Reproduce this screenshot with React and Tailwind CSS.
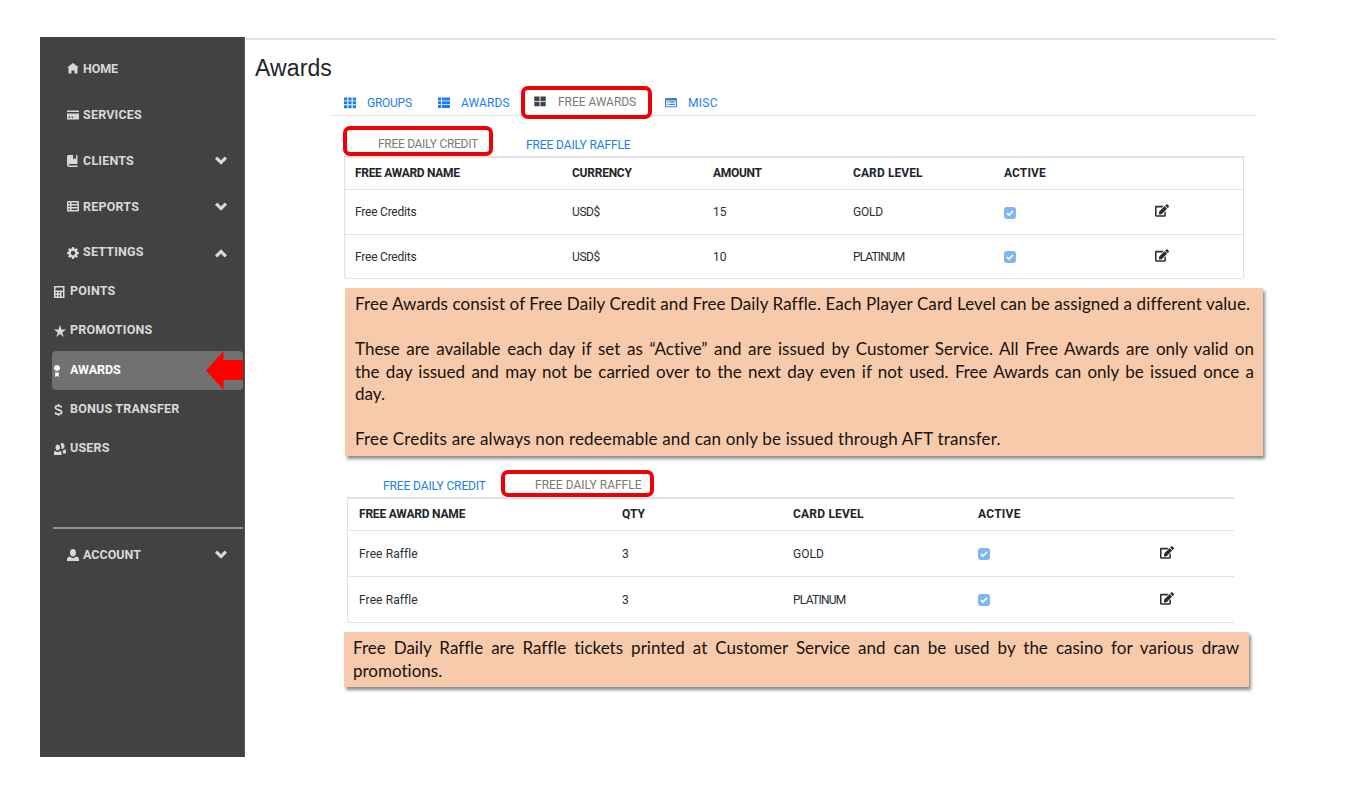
import React from "react";
import { FaEdit } from "react-icons/fa";

const GLYPHS = {
  home: "M4 0l-4 3h1v4h2v-2h2v2h2v-4.03l1 .03-4-3z",
  card: "M.25 1c-.14 0-.25.11-.25.25v.75h8v-.75c0-.14-.11-.25-.25-.25h-7.5zm-.25 2v3.75c0 .14.11.25.25.25h7.5c.14 0 .25-.11.25-.25v-3.75h-8zm1 2h1v1h-1v-1zm2 0h1v1h-1v-1z",
  book: "M1 0c-.07 0-.13.01-.19.03-.39.08-.7.39-.78.78-.03.06-.03.12-.03.19v5.5c0 .83.67 1.5 1.5 1.5h5.5v-1h-5.5c-.28 0-.5-.22-.5-.5s.22-.5.5-.5h5.5v-5.5c0-.28-.22-.5-.5-.5h-.5v3l-1-1-1 1v-3h-3z",
  sheet: "M.75 0c-.41 0-.75.34-.75.75v5.5c0 .41.34.75.75.75h6.5c.41 0 .75-.34.75-.75v-5.5c0-.41-.34-.75-.75-.75h-6.5zm.25 1h1v1h-1v-1zm2 0h4v1h-4v-1zm-2 2h1v1h-1v-1zm2 0h4v1h-4v-1zm-2 2h1v1h-1v-1zm2 0h4v1h-4v-1z",
  cog: "M3.5 0l-.5 1.19c-.1.03-.19.08-.28.13l-1.19-.5-.72.72.5 1.19c-.05.1-.09.18-.13.28l-1.19.5v1l1.19.5c.04.1.08.18.13.28l-.5 1.19.72.72 1.19-.5c.09.04.18.09.28.13l.5 1.19h1l.5-1.19c.09-.04.19-.08.28-.13l1.19.5.72-.72-.5-1.19c.04-.09.09-.19.13-.28l1.19-.5v-1l-1.19-.5c-.03-.09-.08-.19-.13-.28l.5-1.19-.72-.72-1.19.5c-.09-.04-.19-.09-.28-.13l-.5-1.19h-1zm.5 2.5c.83 0 1.5.67 1.5 1.5s-.67 1.5-1.5 1.5-1.5-.67-1.5-1.5.67-1.5 1.5-1.5z",
  calculator: "M0 0h7v8h-7zM1 1v2h5v-2zM1 4v1h1v-1zM3 4v1h1v-1zM5 4v3h1v-3zM1 6v1h1v-1zM3 6v1h1v-1z",
  star: "M4 0l-1 3h-3l2.5 2-1 3 2.5-2 2.5 2-1-3 2.5-2h-3l-1-3z",
  badge: "M2 0c-1.1 0-2 .9-2 2s.9 2 2 2 2-.9 2-2-.9-2-2-2zm-1.200 4.810v3.190l1.200-.7 1.200 .7v-3.190c-.31.110-.85.190-1.200 .190s-.89-.08-1.200-.190z",
  people: "M5.5 0c-.51 0-.95.35-1.19.88.45.54.69 1.275.69 2.13 0 .29-.03.55-.09.81.19.11.38.19.59.19.83 0 1.5-.9 1.5-2s-.67-2-1.5-2zm-3 1c-.83 0-1.5.9-1.5 2s.67 2 1.5 2 1.5-.9 1.5-2-.67-2-1.5-2zm4.75 3.16c-.43.51-1.02.82-1.69.84.27.38.44.84.44 1.34v.66h2v-1.66c0-.52-.31-.97-.75-1.19zm-6.5 1c-.44.22-.75.67-.75 1.19v1.66h5v-1.66c0-.52-.31-.97-.75-1.19-.45.53-1.06.84-1.75.84s-1.3-.32-1.75-.84z",
  person: "M4 0c-1.1 0-2 1.12-2 2.5s.9 2.5 2 2.5 2-1.12 2-2.5-.9-2.5-2-2.5zm-2.09 5c-1.06.05-1.91.92-1.91 2v1h8v-1c0-1.08-.84-1.95-1.91-2-.54.61-1.28 1-2.09 1-.81 0-1.55-.39-2.09-1z",
  down: "M1.5 1l-1.5 1.5 4 4 4-4-1.5-1.5-2.5 2.5-2.5-2.5z",
  up: "M4 1.5l-4 4 1.5 1.5 2.5-2.5 2.5 2.5 1.5-1.5-4-4z",
  grid3: "M0 .3h2.200v2h-2.200zM2.900 .3h2.200v2h-2.200zM5.800 .3h2.200v2h-2.200zM0 2.900h2.200v2h-2.200zM2.900 2.900h2.200v2h-2.200zM5.800 2.900h2.200v2h-2.200zM0 5.500h2.200v2h-2.200zM2.900 5.500h2.200v2h-2.200zM5.800 5.500h2.200v2h-2.200z",
  list: "M0 .4h2.100v1.900h-2.100zM2.600 .4h5.400v1.900h-5.400zM0 2.900h2.100v1.900h-2.100zM2.600 2.900h5.400v1.900h-5.400zM0 5.400h2.100v1.900h-2.100zM2.600 5.400h5.400v1.900h-5.400z",
  grid2: "M.2 .3h3.500v3h-3.500zM4.300 .3h3.500v3h-3.500zM.2 3.900h3.500v3h-3.500zM4.300 3.900h3.500v3h-3.500z",
  browser: "M.6 .7h6.8a.6 .6 0 0 1 .6 .6v5a.6 .6 0 0 1-.6 .6h-6.8a.6 .6 0 0 1-.6-.6v-5a.6 .6 0 0 1 .6-.6zM.8 2.3v3.8h6.4v-3.8zM1.5 2.9h.9v.8h-.9zM2.9 2.9h3.7v.8h-3.7zM1.5 4.5h.9v.8h-.9zM2.9 4.5h3.7v.8h-3.7z",
};

function Glyph({ name, className = "size-3" }) {
  if (name === "dollar") {
    return (
      <svg viewBox="0 0 8 8" className={className} fill="none" stroke="currentColor" strokeWidth="1.1">
        <path d="M4.900 2.500c0-.8-.6-1.300-1.400-1.300h-1.200c-.8 0-1.400.4-1.400 1.200 0 1.900 4.200 1.100 4.200 3 0 .8-.6 1.300-1.400 1.300h-1.400c-.8 0-1.400-.4-1.400-1.200M3 0v1.200M3 6.700v1.200" />
      </svg>
    );
  }
  return (
    <svg viewBox="0 0 8 8" className={className} fill="currentColor">
      <path fillRule="evenodd" d={GLYPHS[name]} />
    </svg>
  );
}

function MenuItem({ icon, label, arrow, className = "h-[46px]" }) {
  return (
    <div className={"flex items-center pl-[27px] pr-[17px] " + className}>
      <Glyph name={icon} className="size-3 shrink-0" />
      <span className="ml-1 flex-1">{label}</span>
      {arrow && <Glyph name={arrow} />}
    </div>
  );
}

function SubItem({ icon, label, className = "" }) {
  return (
    <div className={"flex h-[39px] items-center pl-[14px] " + className}>
      <Glyph name={icon} className="size-3 shrink-0" />
      <span className="ml-1">{label}</span>
    </div>
  );
}

function Sidebar() {
  return (
    <aside className="h-[720px] w-[205px] shrink-0 border-r border-[#555] bg-[#424242] pt-[9px] text-[12.5px] font-bold tracking-[0.2px] text-[#d9d9d9]">
      <MenuItem icon="home" label="HOME" className="h-[46px] tracking-[-0.1px]" />
      <MenuItem icon="card" label="SERVICES" />
      <MenuItem icon="book" label="CLIENTS" arrow="down" />
      <MenuItem icon="sheet" label="REPORTS" arrow="down" />
      <MenuItem icon="cog" label="SETTINGS" arrow="up" className="h-[45px]" />
      <div className="-mt-[3px] flex flex-col">
        <SubItem icon="calculator" label="POINTS" />
        <SubItem icon="star" label="PROMOTIONS" />
        <div className="relative ml-3 mr-px mt-px h-[39px] rounded bg-[#717171] text-white">
          <SubItem icon="badge" label="AWARDS" className="-ml-3 tracking-[-0.05px]" />
          <svg viewBox="0 0 37 39" className="absolute right-0 top-0 h-[39px] w-[37px]" fill="#fe0000">
            <path d="M0 19.5L17.500 0v9h19.500v20h-19.500v10z" />
          </svg>
        </div>
        <SubItem icon="dollar" label="BONUS TRANSFER" />
        <SubItem icon="people" label="USERS" />
      </div>
      <div className="ml-[13px] mr-px mt-[59px] h-[2px] bg-[#8f8f8f]" />
      <MenuItem icon="person" label="ACCOUNT" arrow="down" className="mt-[3px] h-[46px] tracking-[0px]" />
    </aside>
  );
}

function Ring({ className }) {
  return <div className={"pointer-events-none absolute rounded-[7px] border-4 border-[#ee0005] " + className} />;
}

function TopTabs() {
  return (
    <nav className="ml-[85px] flex h-[28px] w-[925px] border-b border-[#dee2e6] pl-[13px] text-[12px] text-[#1a80ef]">
      <div className="flex h-[30px] w-[94px] items-center tracking-[-0.25px]">
        <Glyph name="grid3" />
        <span className="ml-[11px]">GROUPS</span>
      </div>
      <div className="flex h-[30px] w-[96px] items-center tracking-[0.1px]">
        <Glyph name="list" />
        <span className="ml-[11px]">AWARDS</span>
      </div>
      <div className="relative flex h-[28px] w-[131px] items-center text-[#7a7a7a] tracking-[-0.05px]">
        <Glyph name="grid2" className="size-3 text-[#3f454b]" />
        <span className="ml-[12px]">FREE AWARDS</span>
        <Ring className="-left-[13px] -top-[2px] h-[33px] w-[131px]" />
      </div>
      <div className="flex h-[30px] items-center tracking-[0.3px]">
        <Glyph name="browser" className="size-3 text-[#3f7fd6]" />
        <span className="ml-[11px]">MISC</span>
      </div>
    </nav>
  );
}

function Check() {
  return (
    <span className="flex h-3 w-3 items-center justify-center rounded-[3px] bg-[#7fb6f3]">
      <svg viewBox="0 0 8 8" className="size-2" fill="none" stroke="#fff" strokeWidth="1.7">
        <path d="M1 4.200l2 1.800 4-4" />
      </svg>
    </span>
  );
}

function Cells({ row }) {
  return row.map((c, i) => (
    <div key={i} className={c.className || ""}>
      {c.check ? <Check /> : c.edit ? <FaEdit className="-mt-[3px] h-[13px] w-[14px]" /> : <span>{c.text}</span>}
    </div>
  ));
}

const checkCell = { check: true, className: "pt-px" };
const editCell = { edit: true };

function CreditTable() {
  const cols = "grid grid-cols-[217px_141px_140px_151px_151px_1fr] items-center pl-[10px] ";
  return (
    <section className="w-[900px] rounded-b-[3px] border border-t-2 border-[#dfe3e6] text-[12px] text-[#2a2e33]">
      <div className={cols + "h-[31px] pb-[2px] font-bold text-[#212529]"}>
        <span className="tracking-[-0.3px]">FREE AWARD NAME</span>
        <span className="tracking-[-0.25px]">CURRENCY</span>
        <span className="tracking-[-0.3px]">AMOUNT</span>
        <span className="tracking-[0.1px]">CARD LEVEL</span>
        <span className="tracking-[0.1px]">ACTIVE</span>
      </div>
      <div className={cols + "h-[45px] border-t border-[#e1e4e7]"}>
        <Cells row={[{ text: "Free Credits", className: "tracking-[-0.22px]" }, { text: "USD$", className: "tracking-[-0.4px]" }, { text: "15" }, { text: "GOLD", className: "tracking-[-0.2px]" }, checkCell, editCell]} />
      </div>
      <div className={cols + "h-[44px] border-t border-[#e1e4e7]"}>
        <Cells row={[{ text: "Free Credits", className: "tracking-[-0.22px]" }, { text: "USD$", className: "tracking-[-0.4px]" }, { text: "10" }, { text: "PLATINUM", className: "tracking-[-0.9px]" }, checkCell, editCell]} />
      </div>
    </section>
  );
}

function RaffleTable() {
  const cols = "grid grid-cols-[263px_171px_185px_182px_1fr] items-center pl-[11px] ";
  return (
    <section className="ml-[3px] w-[887px] rounded-bl-[3px] border-b border-l border-t-2 border-[#dfe3e6] text-[12px] text-[#2a2e33]">
      <div className={cols + "h-[31px] pb-px font-bold text-[#212529]"}>
        <span className="tracking-[-0.2px]">FREE AWARD NAME</span>
        <span>QTY</span>
        <span className="tracking-[0.2px]">CARD LEVEL</span>
        <span className="tracking-[0.25px]">ACTIVE</span>
      </div>
      {["GOLD", "PLATINUM"].map((level, i) => (
        <div key={level} className={cols + "h-[46px] border-t border-[#e1e4e7]"}>
          <Cells row={[{ text: "Free Raffle", className: "tracking-[0.1px]" }, { text: "3" }, { text: level, className: i ? "tracking-[-0.75px]" : "" }, checkCell, editCell]} />
        </div>
      ))}
    </section>
  );
}

function Note({ className, children }) {
  return (
    <div className={"bg-[#f7caac] font-['Lato',sans-serif] text-[17px] leading-[22.5px] text-[#17110d] shadow-[2px_3px_3px_rgba(0,0,0,0.45)] [font-variant-ligatures:none] " + className}>
      {children}
    </div>
  );
}

export default function App() {
  const full = "whitespace-nowrap [text-align-last:justify]";
  return (
    <div className="flex h-[794px] w-[1361px] overflow-hidden bg-white pl-10 pt-[37px] font-['Roboto',sans-serif]">
      <Sidebar />
      <main className="w-[1031px] pl-px">
        <div className="mt-px h-[2px] bg-[#e2e2e2]" />
        <h1 className="ml-[9px] mt-[11px] h-[34px] font-['Liberation_Sans',sans-serif] text-[23px] leading-[34px] tracking-[0.1px] text-[#212529]">Awards</h1>
        <div className="mt-[3px]">
          <TopTabs />
        </div>
        <div className="ml-[98px] flex flex-col">
          <div className="mt-[13px] flex h-[27px] text-[12px]">
            <div className="relative w-[182px] pl-[34px] pt-[6px] tracking-[-0.3px] text-[#7a7a7a]">
              FREE DAILY CREDIT
              <Ring className="-left-px -top-[3px] z-10 h-[30px] w-[150px]" />
            </div>
            <div className="pt-[7px] tracking-[-0.12px] text-[#1a80ef]">FREE DAILY RAFFLE</div>
          </div>
          <CreditTable />
          <Note className="ml-px mt-[9px] h-[168px] w-[918px] pl-[10px] pr-[9px] pt-[5px]">
            <p className="whitespace-nowrap tracking-[0.1px]">Free Awards consist of Free Daily Credit and Free Daily Raffle. Each Player Card Level can be assigned a different value.</p>
            <div className="mt-[22.5px]">
              <p className={full}>These are available each day if set as “Active” and are issued by Customer Service. All Free Awards are only valid on</p>
              <p className={full}>the day issued and may not be carried over to the next day even if not used. Free Awards can only be issued once a</p>
              <p>day.</p>
            </div>
            <p className="mt-[22.5px] whitespace-nowrap tracking-[0.16px]">Free Credits are always non redeemable and can only be issued through AFT transfer.</p>
          </Note>
          <div className="mt-[13px] flex h-[28px] text-[12px]">
            <div className="w-[157px] pl-[39px] pt-[8px] tracking-[-0.12px] text-[#1a80ef]">FREE DAILY CREDIT</div>
            <div className="relative pl-[34px] pt-[7px] tracking-[0px] text-[#7a7a7a]">
              FREE DAILY RAFFLE
              <Ring className="left-0 top-px h-[27px] w-[153px]" />
            </div>
          </div>
          <RaffleTable />
          <Note className="mt-[9px] h-[55px] w-[905px] pl-[9px] pr-[10px] pt-[5px]">
            <p className={full}>Free Daily Raffle are Raffle tickets printed at Customer Service and can be used by the casino for various draw</p>
            <p>promotions.</p>
          </Note>
        </div>
      </main>
    </div>
  );
}
